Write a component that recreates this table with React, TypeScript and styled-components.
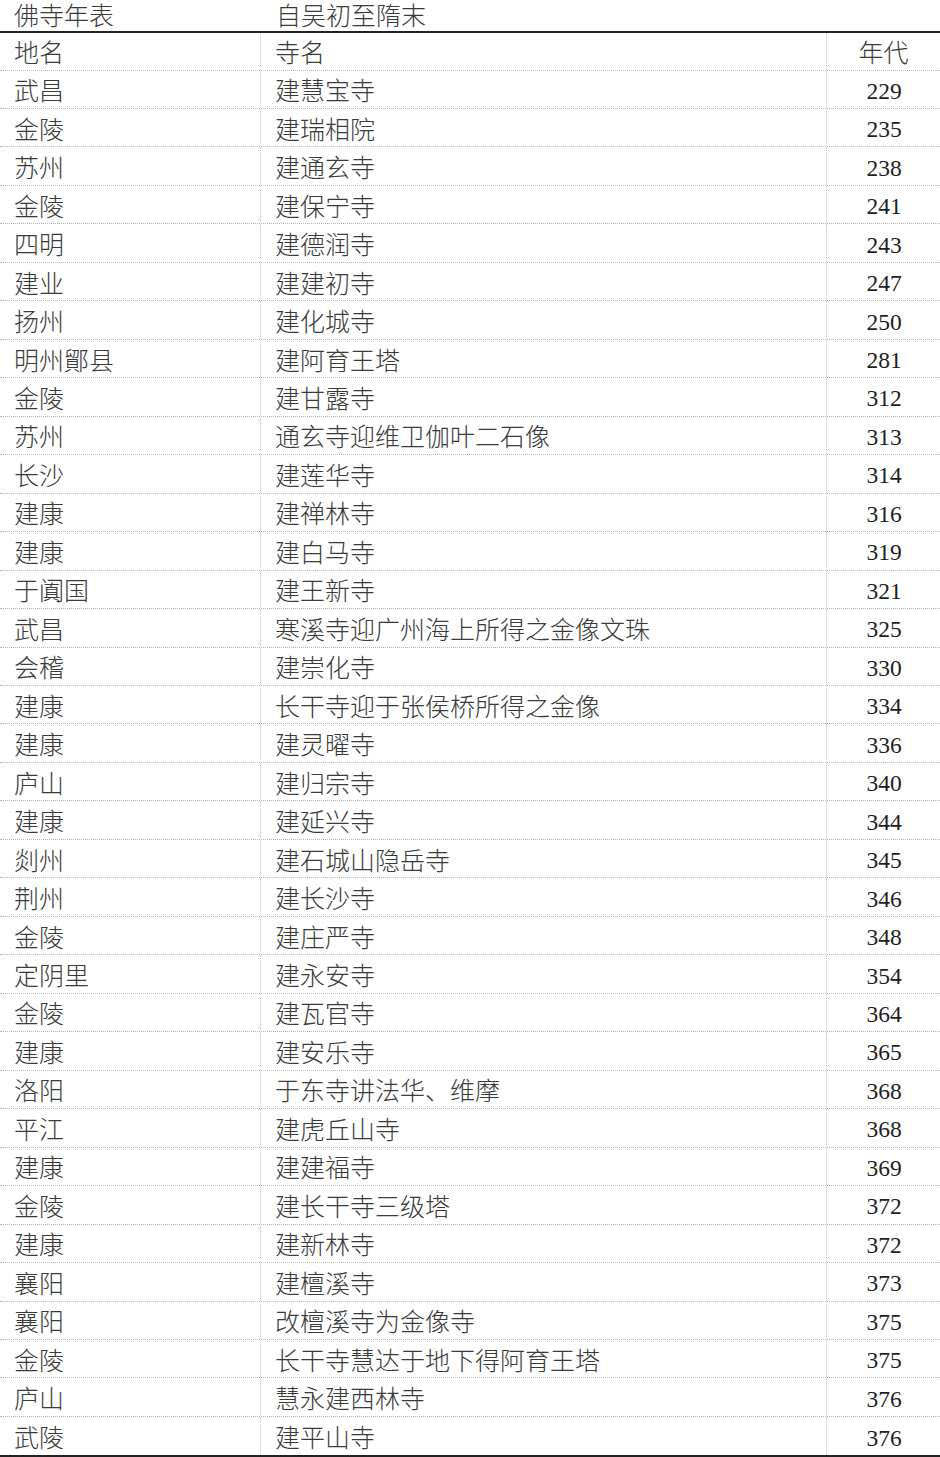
import styled, { createGlobalStyle } from "styled-components";

const GlobalStyle = createGlobalStyle`
  html, body {
    margin: 0;
    padding: 0;
    background: #fff;
  }
  body {
    font-family: "Noto Sans CJK SC", "Noto Sans", sans-serif;
    color: #333;
  }
`;

const rows: [string, string, string][] = [
  ["武昌", "建慧宝寺", "229"],
  ["金陵", "建瑞相院", "235"],
  ["苏州", "建通玄寺", "238"],
  ["金陵", "建保宁寺", "241"],
  ["四明", "建德润寺", "243"],
  ["建业", "建建初寺", "247"],
  ["扬州", "建化城寺", "250"],
  ["明州鄮县", "建阿育王塔", "281"],
  ["金陵", "建甘露寺", "312"],
  ["苏州", "通玄寺迎维卫伽叶二石像", "313"],
  ["长沙", "建莲华寺", "314"],
  ["建康", "建禅林寺", "316"],
  ["建康", "建白马寺", "319"],
  ["于阗国", "建王新寺", "321"],
  ["武昌", "寒溪寺迎广州海上所得之金像文珠", "325"],
  ["会稽", "建崇化寺", "330"],
  ["建康", "长干寺迎于张侯桥所得之金像", "334"],
  ["建康", "建灵曜寺", "336"],
  ["庐山", "建归宗寺", "340"],
  ["建康", "建延兴寺", "344"],
  ["剡州", "建石城山隐岳寺", "345"],
  ["荆州", "建长沙寺", "346"],
  ["金陵", "建庄严寺", "348"],
  ["定阴里", "建永安寺", "354"],
  ["金陵", "建瓦官寺", "364"],
  ["建康", "建安乐寺", "365"],
  ["洛阳", "于东寺讲法华、维摩", "368"],
  ["平江", "建虎丘山寺", "368"],
  ["建康", "建建福寺", "369"],
  ["金陵", "建长干寺三级塔", "372"],
  ["建康", "建新林寺", "372"],
  ["襄阳", "建檀溪寺", "373"],
  ["襄阳", "改檀溪寺为金像寺", "375"],
  ["金陵", "长干寺慧达于地下得阿育王塔", "375"],
  ["庐山", "慧永建西林寺", "376"],
  ["武陵", "建平山寺", "376"],
];

const Page = styled.div`
  width: 940px;
`;

const TitleBar = styled.div`
  display: grid;
  grid-template-columns: 262px 1fr;
  height: 31px;
  align-items: start;
  font-size: 25px;
  font-weight: 300;
  line-height: 29px;
  color: #3a3a3a;
`;

const TitleText = styled.div<{ $indent: number }>`
  padding-left: ${({ $indent }) => $indent}px;
  white-space: nowrap;
`;

const Table = styled.div`
  border-top: 2px solid #222;
  border-bottom: 2px solid #222;
`;

const Row = styled.div<{ $height: number; $last?: boolean }>`
  display: grid;
  grid-template-columns: 261px 566px 1fr;
  height: ${({ $height }) => $height}px;
  box-sizing: border-box;
  border-bottom: ${({ $last }) => ($last ? "none" : "1px dotted #b5b5b5")};
`;

const Cell = styled.div<{ $align?: "left" | "center"; $divider?: boolean }>`
  display: flex;
  align-items: center;
  justify-content: ${({ $align }) => ($align === "center" ? "center" : "flex-start")};
  padding-left: ${({ $align }) => ($align === "center" ? "0" : "14px")};
  border-right: ${({ $divider }) => ($divider ? "1px dotted #c4c4c4" : "none")};
  font-size: 25px;
  font-weight: 300;
  line-height: 30px;
  color: #3a3a3a;
  white-space: nowrap;
`;

const Year = styled.span`
  font-family: "Liberation Serif", "Times New Roman", serif;
  font-size: 23.5px;
  color: #1e1e1e;
  padding-left: 1px;
  padding-top: 3px;
`;

export default function App() {
  return (
    <Page>
      <GlobalStyle />
      <TitleBar>
        <TitleText $indent={14}>佛寺年表</TitleText>
        <TitleText $indent={14}>自吴初至隋末</TitleText>
      </TitleBar>
      <Table>
        <Row $height={37.5}>
          <Cell $divider>地名</Cell>
          <Cell $divider>寺名</Cell>
          <Cell $align="center">年代</Cell>
        </Row>
        {rows.map(([place, temple, year], i) => (
          <Row key={i} $height={38.47} $last={i === rows.length - 1}>
            <Cell $divider>{place}</Cell>
            <Cell $divider>{temple}</Cell>
            <Cell $align="center">
              <Year>{year}</Year>
            </Cell>
          </Row>
        ))}
      </Table>
    </Page>
  );
}
